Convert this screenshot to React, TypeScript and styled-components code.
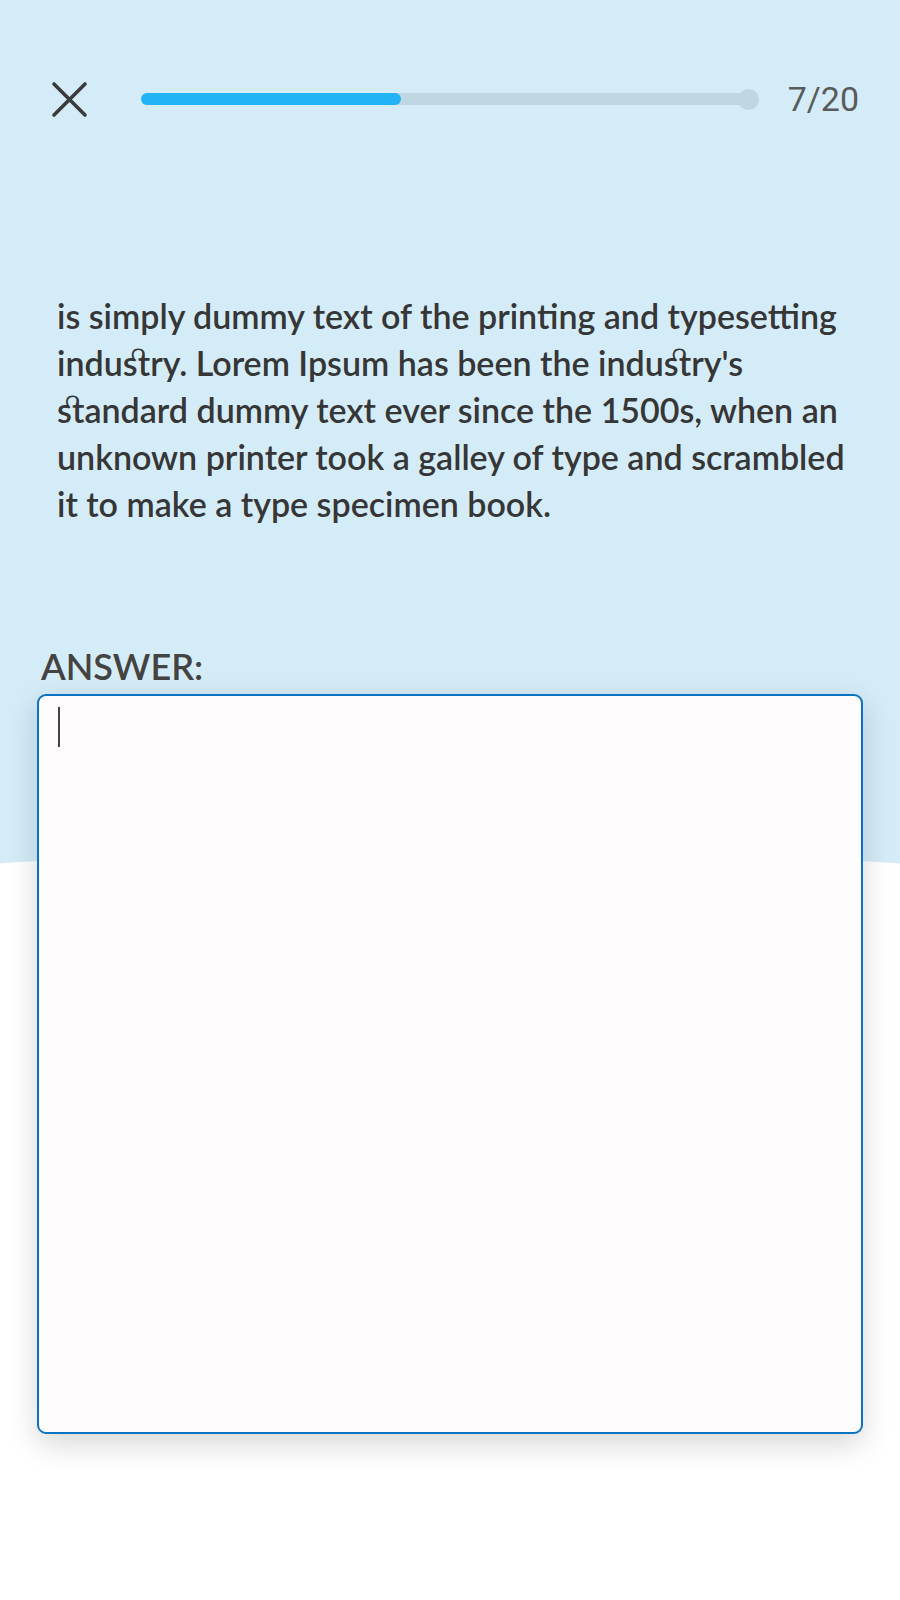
import React from "react";
import styled, { createGlobalStyle } from "styled-components";

const GlobalStyle = createGlobalStyle`
  html, body {
    margin: 0;
    padding: 0;
    background: #ffffff;
  }
  * { box-sizing: border-box; }
`;

const Page = styled.div`
  position: relative;
  width: 900px;
  min-height: 1600px;
  overflow: hidden;
  font-family: "Lato", "Noto Sans", sans-serif;

  &::before {
    content: "";
    position: absolute;
    left: 0;
    top: 0;
    width: 100%;
    height: 880px;
    background: #d4ecf8;
    z-index: 0;
  }
  &::after {
    content: "";
    position: absolute;
    left: -450px;
    top: 850px;
    width: 1800px;
    height: 200px;
    border-radius: 50%;
    background: #ffffff;
    z-index: 0;
  }
`;

const Content = styled.div`
  position: relative;
  z-index: 1;
  display: flex;
  flex-direction: column;
`;

const TopBar = styled.div`
  display: flex;
  align-items: center;
  height: 40px;
  margin-top: 79px;
  padding: 0 41px 0 51px;
`;

const CloseButton = styled.button`
  display: flex;
  align-items: center;
  justify-content: center;
  width: 37px;
  height: 37px;
  padding: 0;
  border: none;
  background: transparent;
  color: #3b3b3b;
  cursor: pointer;
`;

const Track = styled.div`
  position: relative;
  flex: 1;
  height: 12px;
  margin: 0 30px 0 53px;
  border-radius: 6px;
  background: #bed7e2;

  &::after {
    content: "";
    position: absolute;
    right: -1px;
    top: 50%;
    width: 21px;
    height: 21px;
    margin-top: -10.5px;
    border-radius: 50%;
    background: #bed7e2;
  }
`;

const Fill = styled.div`
  height: 100%;
  border-radius: 6px;
  background: #22b3f7;
`;

const Counter = styled.span`
  font-family: "Roboto", "Liberation Sans", sans-serif;
  font-size: 34px;
  color: #5a5a5a;
  line-height: 1;
`;

const Question = styled.p`
  margin: 173px 0 0;
  padding: 0 40px 0 57px;
  font-size: 34px;
  font-weight: 600;
  line-height: 47px;
  color: #363636;
  font-variant-ligatures: common-ligatures discretionary-ligatures;
`;

const Label = styled.div`
  margin: 117px 0 0 41px;
  font-size: 36px;
  font-weight: 600;
  line-height: 44px;
  color: #454242;
`;

const AnswerBox = styled.div`
  margin: 6px 37px 0;
  height: 740px;
  padding: 11px 19px;
  border: 2px solid #0b73bf;
  border-radius: 9px;
  background: #fefcfd;
  box-shadow: 0 10px 30px rgba(0, 0, 0, 0.16);
`;

const Caret = styled.span`
  display: block;
  width: 2px;
  height: 40px;
  background: #454242;
`;

const answered = 7;
const total = 20;

export default function App() {
  return (
    <>
      <GlobalStyle />
      <Page>
        <Content>
          <TopBar>
            <CloseButton aria-label="Close">
              <svg width="37" height="37" viewBox="0 0 37 37">
                <path
                  d="M3 3 L34 34 M34 3 L3 34"
                  stroke="currentColor"
                  strokeWidth="3.6"
                  strokeLinecap="round"
                />
              </svg>
            </CloseButton>
            <Track>
              <Fill style={{ width: `${(260 / 616) * 100}%` }} />
            </Track>
            <Counter>
              {answered}/{total}
            </Counter>
          </TopBar>
          <Question>
            is simply dummy text of the printing and typesetting industry. Lorem Ipsum has been
            the industry's standard dummy text ever since the 1500s, when an unknown printer took a
            galley of type and scrambled it to make a type specimen book.
          </Question>
          <Label>ANSWER:</Label>
          <AnswerBox>
            <Caret />
          </AnswerBox>
        </Content>
      </Page>
    </>
  );
}
